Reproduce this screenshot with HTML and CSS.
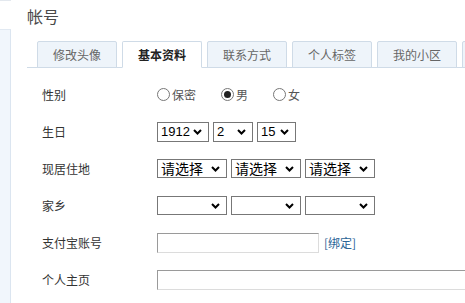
FILE: index.html
```html
<!DOCTYPE html>
<html lang="zh">
<head>
<meta charset="utf-8">
<link rel="stylesheet" href="styles.css">
</head>
<body>
<div class="page">
  <aside class="side">
    <div class="side-top"></div>
    <div class="side-box"></div>
  </aside>
  <main class="main">
    <h1 class="title">帐号</h1>
    <nav class="tabs">
      <span class="tab">修改头像</span>
      <span class="tab active">基本资料</span>
      <span class="tab">联系方式</span>
      <span class="tab">个人标签</span>
      <span class="tab">我的小区</span>
      <span class="tab"></span>
    </nav>
    <div class="form">
      <div class="row">
        <span class="label">性别</span>
        <div class="ctrl">
          <span class="radio-item"><span class="radio"></span>保密</span>
          <span class="radio-item"><span class="radio on"></span>男</span>
          <span class="radio-item"><span class="radio"></span>女</span>
        </div>
      </div>
      <div class="row">
        <span class="label">生日</span>
        <div class="ctrl">
          <span class="sel tall w52"><span class="val num">1912</span><svg class="chev" viewBox="0 0 9 6"><path d="M1 1 L4.5 4.5 L8 1" fill="none" stroke="#000" stroke-width="2"/></svg></span>
          <span class="sel tall w40"><span class="val num">2</span><svg class="chev" viewBox="0 0 9 6"><path d="M1 1 L4.5 4.5 L8 1" fill="none" stroke="#000" stroke-width="2"/></svg></span>
          <span class="sel tall w39"><span class="val num">15</span><svg class="chev" viewBox="0 0 9 6"><path d="M1 1 L4.5 4.5 L8 1" fill="none" stroke="#000" stroke-width="2"/></svg></span>
        </div>
      </div>
      <div class="row">
        <span class="label">现居住地</span>
        <div class="ctrl">
          <span class="sel w70"><span class="val">请选择</span><svg class="chev" viewBox="0 0 9 6"><path d="M1 1 L4.5 4.5 L8 1" fill="none" stroke="#000" stroke-width="2"/></svg></span>
          <span class="sel w70"><span class="val">请选择</span><svg class="chev" viewBox="0 0 9 6"><path d="M1 1 L4.5 4.5 L8 1" fill="none" stroke="#000" stroke-width="2"/></svg></span>
          <span class="sel w70"><span class="val">请选择</span><svg class="chev" viewBox="0 0 9 6"><path d="M1 1 L4.5 4.5 L8 1" fill="none" stroke="#000" stroke-width="2"/></svg></span>
        </div>
      </div>
      <div class="row">
        <span class="label">家乡</span>
        <div class="ctrl">
          <span class="sel w70"><span class="val"></span><svg class="chev" viewBox="0 0 9 6"><path d="M1 1 L4.5 4.5 L8 1" fill="none" stroke="#000" stroke-width="2"/></svg></span>
          <span class="sel w70"><span class="val"></span><svg class="chev" viewBox="0 0 9 6"><path d="M1 1 L4.5 4.5 L8 1" fill="none" stroke="#000" stroke-width="2"/></svg></span>
          <span class="sel w70"><span class="val"></span><svg class="chev" viewBox="0 0 9 6"><path d="M1 1 L4.5 4.5 L8 1" fill="none" stroke="#000" stroke-width="2"/></svg></span>
        </div>
      </div>
      <div class="row">
        <span class="label">支付宝账号</span>
        <div class="ctrl">
          <span class="input short"></span>
          <a class="link" href="#">[绑定]</a>
        </div>
      </div>
      <div class="row">
        <span class="label">个人主页</span>
        <div class="ctrl">
          <span class="input long"></span>
        </div>
      </div>
    </div>
  </main>
</div>
</body>
</html>
```
FILE: styles.css
```css
html, body {
  margin: 0;
  padding: 0;
  background: #fff;
  overflow: hidden;
}
body {
  font-family: "Noto Sans CJK SC", "Liberation Sans", sans-serif;
  font-size: 12px;
  color: #333;
  width: 465px;
  height: 303px;
}
.page {
  display: flex;
  height: 303px;
}
.side {
  width: 11px;
  flex: none;
  display: flex;
  flex-direction: column;
}
.side-top {
  height: 1px;
  background: #e3e8ee;
}
.side-box {
  margin-top: 28px;
  flex: 1;
  background: #f1f6fc;
  border-top: 1px solid #e1e9f2;
  border-right: 1px solid #dbe5f0;
}
.main {
  flex: 1;
  padding-left: 16px;
  min-width: 0;
  overflow: hidden;
}
.title {
  margin: 0;
  padding-top: 6px;
  height: 41px;
  box-sizing: border-box;
  font-size: 16px;
  font-weight: normal;
  color: #4a4a4a;
  line-height: 20px;
}
.tabs {
  display: flex;
  gap: 5px;
  padding-left: 10px;
  height: 27px;
  box-sizing: border-box;
  border-bottom: 1px solid #cfdbe7;
  white-space: nowrap;
}
.tab {
  flex: none;
  width: 80px;
  height: 27px;
  box-sizing: border-box;
  border: 1px solid #cfdbe7;
  border-radius: 2px 2px 0 0;
  background: #eef4fa;
  color: #666;
  text-align: center;
  line-height: 25px;
  font-size: 12px;
}
.tab.active {
  background: #fff;
  border-bottom-color: #fff;
  color: #222;
  font-weight: bold;
}
.form {
  padding-top: 8px;
  padding-left: 15px;
}
.row {
  display: flex;
  align-items: center;
  height: 37px;
}
.label {
  width: 115px;
  flex: none;
  color: #333;
}
.ctrl {
  display: flex;
  align-items: center;
  gap: 5px;
  white-space: nowrap;
}
.radio-item {
  display: inline-flex;
  align-items: center;
  color: #555;
  margin-right: 20px;
}
.radio-item:last-child { margin-right: 0; }
.radio {
  width: 11px;
  height: 11px;
  border: 1px solid #777;
  border-radius: 50%;
  margin-right: 2px;
  position: relative;
  box-sizing: content-box;
}
.radio.on::after {
  content: "";
  position: absolute;
  left: 2px;
  top: 2px;
  width: 7px;
  height: 7px;
  border-radius: 50%;
  background: #222;
}
.sel {
  display: inline-flex;
  align-items: center;
  justify-content: space-between;
  box-sizing: border-box;
  height: 19px;
  border: 1px solid #777;
  background: #fff;
  padding: 0 6px 0 3px;
  color: #000;
}
.sel.tall { height: 20px; margin-right: -1px; }
.sel.w52 { width: 52px; }
.sel.w40 { width: 40px; }
.sel.w39 { width: 39px; }
.sel.w70 { width: 70px; margin-right: -1px; }
.val {
  font-size: 14px;
  line-height: 17px;
}
.val.num {
  font-family: "Liberation Sans", Arial, sans-serif;
  font-size: 13px;
}
.chev {
  width: 9px;
  height: 6px;
  flex: none;
}
.input {
  display: inline-block;
  box-sizing: border-box;
  height: 20px;
  border-top: 1px solid #9a9a9a;
  border-left: 1px solid #9a9a9a;
  border-right: 1px solid #dcdcdc;
  border-bottom: 1px solid #dcdcdc;
  background: #fff;
}
.input.short { width: 162px; }
.input.long { width: 330px; }
.link {
  color: #2a6496;
  text-decoration: none;
  font-size: 12px;
}
```
